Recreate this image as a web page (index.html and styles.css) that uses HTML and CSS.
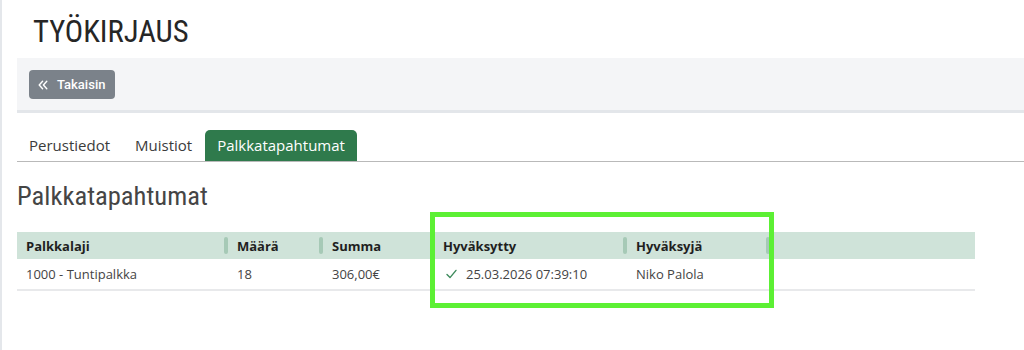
FILE: index.html
```html
<!DOCTYPE html>
<html lang="fi">
<head>
<meta charset="utf-8">
<title>Työkirjaus</title>
<link rel="stylesheet" href="styles.css">
</head>
<body>
<div class="page">
  <h1 class="title">TYÖKIRJAUS</h1>
  <div class="toolbar">
    <button class="btn-back" type="button">
      <svg class="btn-icon" width="10" height="10" viewBox="0 0 10 10" aria-hidden="true">
        <path d="M4.6 1.2 L1.2 5 L4.6 8.8 M8.8 1.2 L5.4 5 L8.8 8.8" fill="none" stroke="#fff" stroke-width="1.4" stroke-linecap="round" stroke-linejoin="round"/>
      </svg>
      <span>Takaisin</span>
    </button>
  </div>
  <nav class="tabs">
    <span class="tab">Perustiedot</span>
    <span class="tab">Muistiot</span>
    <span class="tab tab-active">Palkkatapahtumat</span>
  </nav>
  <h2 class="section-title">Palkkatapahtumat</h2>
  <div class="table">
    <div class="row head">
      <div class="cell">Palkkalaji<i class="handle"></i></div>
      <div class="cell">Määrä<i class="handle"></i></div>
      <div class="cell">Summa<i class="handle"></i></div>
      <div class="cell">Hyväksytty<i class="handle"></i></div>
      <div class="cell">Hyväksyjä<i class="handle"></i></div>
      <div class="cell"></div>
    </div>
    <div class="row body">
      <div class="cell">1000 - Tuntipalkka</div>
      <div class="cell">18</div>
      <div class="cell">306,00€</div>
      <div class="cell"><svg class="check" width="11" height="10" viewBox="0 0 11 10" aria-hidden="true"><path d="M1 5.6 L4 8.6 L10 1.4" fill="none" stroke="#3d8a5c" stroke-width="1.4" stroke-linecap="round" stroke-linejoin="round"/></svg>25.03.2026 07:39:10</div>
      <div class="cell">Niko Palola</div>
      <div class="cell"></div>
    </div>
  </div>
  <div class="highlight"></div>
</div>
</body>
</html>
```
FILE: styles.css
```css
html, body {
  margin: 0;
  padding: 0;
  background: #fff;
}
body {
  font-family: "Open Sans", "Liberation Sans", sans-serif;
  color: #333;
}
.page {
  position: relative;
  min-height: 350px;
  box-sizing: border-box;
  border-left: 2px solid #e4e7eb;
  padding-left: 15px;
}
.title {
  margin: 0 0 7px 0;
  padding: 13px 0 0 16px;
  font-family: "Roboto Condensed", Roboto, sans-serif;
  font-weight: 400;
  font-size: 30.6px;
  line-height: 38px;
  color: #262626;
}
.toolbar {
  background: #f4f5f7;
  border-bottom: 3px solid #e3e6ea;
  padding: 12px 12px 11px;
}
.btn-back {
  display: inline-flex;
  align-items: center;
  gap: 9px;
  height: 29px;
  padding: 0 10px 0 9px;
  border: 0;
  border-radius: 4px;
  background: #7b828a;
  color: #fff;
  font-family: Roboto, "Open Sans", sans-serif;
  font-size: 13px;
  font-weight: 500;
}
.btn-icon {
  display: block;
}
.tabs {
  display: flex;
  margin-top: 17px;
  border-bottom: 1px solid #b9b9b9;
}
.tab {
  padding: 0 13px 0 12px;
  height: 31px;
  line-height: 31px;
  font-size: 15px;
  color: #3b3b3b;
}
.tab-active {
  padding: 0 12px;
  background: #2f7a4c;
  color: #fff;
  border-radius: 5px 5px 0 0;
}
.section-title {
  margin: 14px 0 0;
  font-family: "Roboto Condensed", Roboto, sans-serif;
  font-weight: 400;
  font-size: 26.6px;
  line-height: 40px;
  color: #454545;
}
.table {
  width: 958px;
  margin-top: 16px;
  font-size: 13px;
}
.row {
  display: grid;
  grid-template-columns: 211px 95px 111px 193px 143px 1fr;
}
.head {
  height: 27px;
  background: #cfe3d9;
  font-weight: 700;
  color: #1f1f1f;
}
.body {
  height: 30px;
  border-bottom: 2px solid #e8e9eb;
  color: #444;
}
.cell {
  position: relative;
  display: flex;
  align-items: center;
  padding-left: 9px;
  white-space: nowrap;
}
.handle {
  position: absolute;
  right: 0;
  top: 5px;
  width: 4px;
  height: 17px;
  border-radius: 2px;
  background: #a6c9b6;
}
.check {
  display: block;
  margin: 0 9px 0 3px;
}
.highlight {
  position: absolute;
  left: 428px;
  top: 212px;
  width: 344px;
  height: 96px;
  box-sizing: border-box;
  border: 5px solid #5cf034;
}
```
